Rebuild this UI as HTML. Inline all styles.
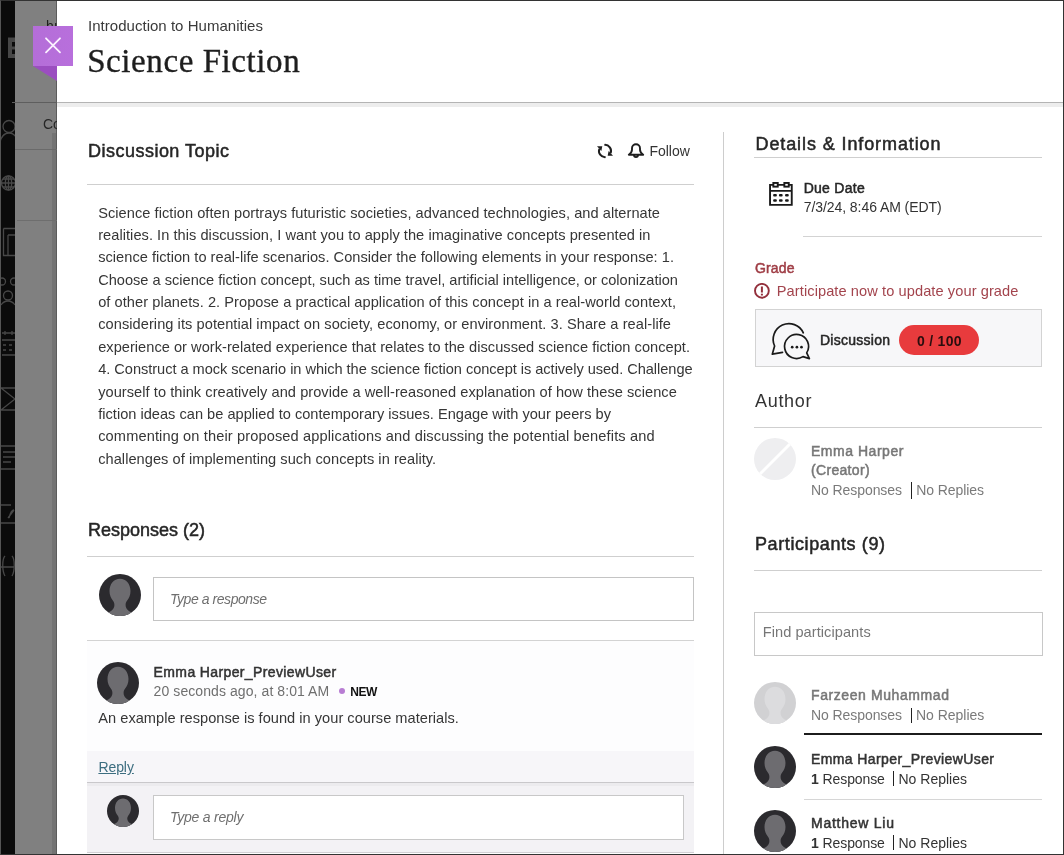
<!DOCTYPE html>
<html><head><meta charset="utf-8"><title>Science Fiction</title><style>html,body{margin:0;padding:0;width:1064px;height:855px;overflow:hidden;background:#fff;font-family:"Liberation Sans",sans-serif}</style></head><body>
<div style="position:relative;width:1064px;height:855px;overflow:hidden;will-change:transform">
<div style="position:absolute;left:0px;top:0px;width:15px;height:855px;background:#0b0b0b;"></div>
<div style="position:absolute;left:15px;top:0px;width:42px;height:855px;background:#808080;"></div>
<div style="position:absolute;left:52px;top:133px;width:4px;height:722px;background:#737373;"></div>
<div style="position:absolute;left:56px;top:0px;width:1px;height:855px;background:#5c5c5c;"></div>
<div style="position:absolute;left:12px;top:102px;width:45px;height:1px;background:#5e5e5e;"></div>
<div style="position:absolute;left:15px;top:149px;width:42px;height:1px;background:#6a6a6a;"></div>
<div style="position:absolute;left:17px;top:220px;width:40px;height:1px;background:#6e6e6e;"></div>
<div style="position:absolute;left:43px;top:117.15px;font-family:'Liberation Sans', sans-serif;font-size:14px;line-height:14px;font-weight:400;font-style:normal;color:#262626;white-space:pre;">Co</div>
<div style="position:absolute;left:46px;top:18.65px;font-family:'Liberation Sans', sans-serif;font-size:14px;line-height:14px;font-weight:400;font-style:normal;color:#1e1e1e;white-space:pre;">hı</div>
<svg style="position:absolute;left:0;top:0" width="15" height="855" viewBox="0 0 15 855">
<rect x="8" y="37.5" width="7" height="20.5" fill="#474747"/><rect x="12" y="42" width="3" height="4.5" fill="#0b0b0b"/><rect x="12" y="49.5" width="3" height="4.5" fill="#0b0b0b"/>
<g fill="none" stroke="#484848" stroke-width="1.3">
<circle cx="9" cy="126.5" r="6"/><path d="M0 142c1.5-6 5-9 9-9s7.5 3 9 9"/>
<circle cx="8.5" cy="183" r="7"/><path d="M1.5 183h14M8.5 176v14M3 179h11M3 187h11"/><ellipse cx="8.5" cy="183" rx="3.2" ry="7"/>
<path d="M3.5 228.5h14M3.5 228.5v27h14M8 235v20M8 235h8"/>
<circle cx="2" cy="281.5" r="3.5"/><circle cx="14" cy="281.5" r="3.5"/><circle cx="8" cy="295.5" r="4.5"/><path d="M1 305c2-3 4-4 7-4s5 1 7 4"/>
<path d="M2 333h13M2 340h13M2 355h13M5 331v4M12 331v4"/><path d="M3 345h3M9 345h3M3 350h3M9 350h3"/>
<path d="M1 388h15M1 410h15M1 388l14 11M1 410l14-11"/>
<path d="M1 446h14M3 452h12M3 457h12M3 462h8M1 469h14"/>
<path d="M1 505h10M1 523h14M8 518l6-8M14 510c-2 0-4 4-5 8"/>
<path d="M5 556c-3 3-3 15 0 20M12 556c3 3 3 15 0 20M0 567h14"/>
</g></svg>
<div style="position:absolute;left:57px;top:0px;width:1007px;height:855px;background:#ffffff;"></div>
<div style="position:absolute;left:57px;top:102px;width:1007px;height:1px;background:#b4b4b4;"></div>
<div style="position:absolute;left:57px;top:103px;width:1007px;height:4px;background:#ededed;"></div>
<svg style="position:absolute;left:33px;top:26px" width="40" height="56" viewBox="0 0 40 56">
<defs><linearGradient id="pg" x1="0" y1="0" x2="1" y2="0"><stop offset="0" stop-color="#b46ed8"/><stop offset="1" stop-color="#b86fdc"/></linearGradient></defs>
<path d="M0 40h24v15z" fill="#9b4ec0"/>
<rect x="0" y="0" width="40" height="40" fill="url(#pg)"/>
<path d="M13 12.3l14 14M27 12.3L13 26.3" stroke="#fbf2ff" stroke-width="1.8" stroke-linecap="round" fill="none"/>
</svg>
<div style="position:absolute;left:88px;top:18.30px;font-family:'Liberation Sans', sans-serif;font-size:15px;line-height:15px;font-weight:400;font-style:normal;color:#3a3a3a;white-space:pre;letter-spacing:0.029px;">Introduction to Humanities</div>
<div style="position:absolute;left:87.2px;top:45.36px;font-family:'Liberation Serif', serif;font-size:33px;line-height:33px;font-weight:400;font-style:normal;color:#1e1e1e;white-space:pre;letter-spacing:0.580px;-webkit-text-stroke:0.35px #1e1e1e">Science Fiction</div>
<div style="position:absolute;left:88px;top:141.76px;font-family:'Liberation Sans', sans-serif;font-size:18px;line-height:18px;font-weight:400;font-style:normal;color:#262626;white-space:pre;letter-spacing:0.484px;-webkit-text-stroke:0.5px #262626;">Discussion Topic</div>
<svg style="position:absolute;left:596px;top:142px;" width="18" height="18" viewBox="0 0 18 18"><g fill="none" stroke="#1e1e1e" stroke-width="2"><path d="M3.4 6.8A6.1 6.1 0 0 0 9.6 15.1"/><path d="M14.6 11.2A6.1 6.1 0 0 0 8.4 2.9"/></g><path d="M1 4.2l5.3 0.1-0.9 4.6z" fill="#1e1e1e"/><path d="M17 13.8l-5.3-0.1 0.9-4.6z" fill="#1e1e1e"/></svg>
<svg style="position:absolute;left:627px;top:142px;" width="18" height="18" viewBox="0 0 18 18"><g fill="none" stroke="#1e1e1e" stroke-width="1.9" stroke-linejoin="round"><path d="M1.8 12.7H16.2C14.2 11.3 13 10 13 7.8V6.2A4 4 0 0 0 5 6.2V7.8C5 10 3.8 11.3 1.8 12.7Z"/><path d="M7 13.1A2 2 0 0 0 11 13.1"/></g></svg>
<div style="position:absolute;left:649.5px;top:143.55px;font-family:'Liberation Sans', sans-serif;font-size:14px;line-height:14px;font-weight:400;font-style:normal;color:#333;white-space:pre;letter-spacing:-0.034px;">Follow</div>
<div style="position:absolute;left:87px;top:184px;width:607px;height:1px;background:#cfcfcf;"></div>
<div style="position:absolute;left:98.2px;top:205.64px;font-family:'Liberation Sans', sans-serif;font-size:14.6px;line-height:14.6px;font-weight:400;font-style:normal;color:#363636;white-space:pre;letter-spacing:0.051px;">Science fiction often portrays futuristic societies, advanced technologies, and alternate</div>
<div style="position:absolute;left:98.2px;top:228.00px;font-family:'Liberation Sans', sans-serif;font-size:14.6px;line-height:14.6px;font-weight:400;font-style:normal;color:#363636;white-space:pre;letter-spacing:0.045px;">realities. In this discussion, I want you to apply the imaginative concepts presented in</div>
<div style="position:absolute;left:98.2px;top:250.36px;font-family:'Liberation Sans', sans-serif;font-size:14.6px;line-height:14.6px;font-weight:400;font-style:normal;color:#363636;white-space:pre;letter-spacing:0.025px;">science fiction to real-life scenarios. Consider the following elements in your response: 1.</div>
<div style="position:absolute;left:98.2px;top:272.72px;font-family:'Liberation Sans', sans-serif;font-size:14.6px;line-height:14.6px;font-weight:400;font-style:normal;color:#363636;white-space:pre;letter-spacing:-0.002px;">Choose a science fiction concept, such as time travel, artificial intelligence, or colonization</div>
<div style="position:absolute;left:98.2px;top:295.08px;font-family:'Liberation Sans', sans-serif;font-size:14.6px;line-height:14.6px;font-weight:400;font-style:normal;color:#363636;white-space:pre;letter-spacing:0.055px;">of other planets. 2. Propose a practical application of this concept in a real-world context,</div>
<div style="position:absolute;left:98.2px;top:317.44px;font-family:'Liberation Sans', sans-serif;font-size:14.6px;line-height:14.6px;font-weight:400;font-style:normal;color:#363636;white-space:pre;letter-spacing:0.062px;">considering its potential impact on society, economy, or environment. 3. Share a real-life</div>
<div style="position:absolute;left:98.2px;top:339.80px;font-family:'Liberation Sans', sans-serif;font-size:14.6px;line-height:14.6px;font-weight:400;font-style:normal;color:#363636;white-space:pre;letter-spacing:0.031px;">experience or work-related experience that relates to the discussed science fiction concept.</div>
<div style="position:absolute;left:98.2px;top:362.16px;font-family:'Liberation Sans', sans-serif;font-size:14.6px;line-height:14.6px;font-weight:400;font-style:normal;color:#363636;white-space:pre;letter-spacing:-0.037px;">4. Construct a mock scenario in which the science fiction concept is actively used. Challenge</div>
<div style="position:absolute;left:98.2px;top:384.52px;font-family:'Liberation Sans', sans-serif;font-size:14.6px;line-height:14.6px;font-weight:400;font-style:normal;color:#363636;white-space:pre;letter-spacing:0.048px;">yourself to think creatively and provide a well-reasoned explanation of how these science</div>
<div style="position:absolute;left:98.2px;top:406.88px;font-family:'Liberation Sans', sans-serif;font-size:14.6px;line-height:14.6px;font-weight:400;font-style:normal;color:#363636;white-space:pre;letter-spacing:0.012px;">fiction ideas can be applied to contemporary issues. Engage with your peers by</div>
<div style="position:absolute;left:98.2px;top:429.24px;font-family:'Liberation Sans', sans-serif;font-size:14.6px;line-height:14.6px;font-weight:400;font-style:normal;color:#363636;white-space:pre;letter-spacing:0.126px;">commenting on their proposed applications and discussing the potential benefits and</div>
<div style="position:absolute;left:98.2px;top:451.60px;font-family:'Liberation Sans', sans-serif;font-size:14.6px;line-height:14.6px;font-weight:400;font-style:normal;color:#363636;white-space:pre;letter-spacing:0.047px;">challenges of implementing such concepts in reality.</div>
<div style="position:absolute;left:88px;top:521.06px;font-family:'Liberation Sans', sans-serif;font-size:18px;line-height:18px;font-weight:400;font-style:normal;color:#262626;white-space:pre;letter-spacing:-0.005px;-webkit-text-stroke:0.5px #262626;">Responses (2)</div>
<div style="position:absolute;left:87px;top:556px;width:607px;height:1px;background:#cfcfcf;"></div>
<svg style="position:absolute;left:99px;top:574px;" width="42" height="42" viewBox="0 0 42 42"><defs><clipPath id="c99_574"><circle cx="21.0" cy="21.0" r="21.0"/></clipPath></defs>
<circle cx="21.0" cy="21.0" r="21.0" fill="#2b2a2e"/>
<g clip-path="url(#c99_574)"><g transform="scale(1.0)"><path fill="#6d6c70" d="M21 4.7C27.2 4.7 31.5 10 31.5 17C31.5 21 30 24.5 28 26.8C27 28 26.6 29.5 26.6 31C26.6 35 30 38 34 38.5L42 40L42 46L0 46L0 40L8 38.5C12 38 15.4 35 15.4 31C15.4 29.5 15 28 14 26.8C12 24.5 10.5 21 10.5 17C10.5 10 14.8 4.7 21 4.7Z"/></g></g></svg>
<div style="position:absolute;left:153px;top:577px;width:541px;height:44px;background:#fff;border:1px solid #c4c4c4;box-sizing:border-box"></div>
<div style="position:absolute;left:170px;top:592.15px;font-family:'Liberation Sans', sans-serif;font-size:14px;line-height:14px;font-weight:400;font-style:italic;color:#6f6f6f;white-space:pre;letter-spacing:-0.446px;">Type a response</div>
<div style="position:absolute;left:87px;top:640px;width:607px;height:1px;background:#d3d3d3;"></div>
<div style="position:absolute;left:87px;top:641px;width:607px;height:110px;background:#fdfdfe;"></div>
<svg style="position:absolute;left:97px;top:662px;" width="42" height="42" viewBox="0 0 42 42"><defs><clipPath id="c97_662"><circle cx="21.0" cy="21.0" r="21.0"/></clipPath></defs>
<circle cx="21.0" cy="21.0" r="21.0" fill="#2b2a2e"/>
<g clip-path="url(#c97_662)"><g transform="scale(1.0)"><path fill="#6d6c70" d="M21 4.7C27.2 4.7 31.5 10 31.5 17C31.5 21 30 24.5 28 26.8C27 28 26.6 29.5 26.6 31C26.6 35 30 38 34 38.5L42 40L42 46L0 46L0 40L8 38.5C12 38 15.4 35 15.4 31C15.4 29.5 15 28 14 26.8C12 24.5 10.5 21 10.5 17C10.5 10 14.8 4.7 21 4.7Z"/></g></g></svg>
<div style="position:absolute;left:153.6px;top:664.65px;font-family:'Liberation Sans', sans-serif;font-size:14px;line-height:14px;font-weight:400;font-style:normal;color:#333;white-space:pre;letter-spacing:0.374px;-webkit-text-stroke:0.5px #333;">Emma Harper_PreviewUser</div>
<div style="position:absolute;left:153.6px;top:683.85px;font-family:'Liberation Sans', sans-serif;font-size:14px;line-height:14px;font-weight:400;font-style:normal;color:#6f6f6f;white-space:pre;letter-spacing:0.081px;">20 seconds ago, at 8:01 AM</div>
<div style="position:absolute;left:339px;top:687.8px;width:6px;height:6px;border-radius:50%;background:#b87dd3"></div>
<div style="position:absolute;left:350.3px;top:685.54px;font-family:'Liberation Sans', sans-serif;font-size:12px;line-height:12px;font-weight:700;font-style:normal;color:#111;white-space:pre;letter-spacing:-0.500px;">NEW</div>
<div style="position:absolute;left:98.3px;top:711.34px;font-family:'Liberation Sans', sans-serif;font-size:14.6px;line-height:14.6px;font-weight:400;font-style:normal;color:#363636;white-space:pre;letter-spacing:0.022px;">An example response is found in your course materials.</div>
<div style="position:absolute;left:87px;top:751px;width:607px;height:31px;background:#f7f6f9;"></div>
<div style="position:absolute;left:98.4px;top:760.35px;font-family:'Liberation Sans', sans-serif;font-size:14px;line-height:14px;font-weight:400;font-style:normal;color:#3d6e80;white-space:pre;letter-spacing:-0.074px;text-decoration:underline;text-underline-offset:1px">Reply</div>
<div style="position:absolute;left:87px;top:782px;width:607px;height:1px;background:#c9c8cb;"></div>
<div style="position:absolute;left:87px;top:783px;width:607px;height:3px;background:#ecebee;"></div>
<div style="position:absolute;left:87px;top:786px;width:607px;height:66px;background:#f3f2f5;"></div>
<div style="position:absolute;left:87px;top:852px;width:607px;height:1px;background:#d2d0d4;"></div>
<svg style="position:absolute;left:107px;top:795px;" width="32" height="32" viewBox="0 0 32 32"><defs><clipPath id="c107_795"><circle cx="16.0" cy="16.0" r="16.0"/></clipPath></defs>
<circle cx="16.0" cy="16.0" r="16.0" fill="#2b2a2e"/>
<g clip-path="url(#c107_795)"><g transform="scale(0.7619047619047619)"><path fill="#6d6c70" d="M21 4.7C27.2 4.7 31.5 10 31.5 17C31.5 21 30 24.5 28 26.8C27 28 26.6 29.5 26.6 31C26.6 35 30 38 34 38.5L42 40L42 46L0 46L0 40L8 38.5C12 38 15.4 35 15.4 31C15.4 29.5 15 28 14 26.8C12 24.5 10.5 21 10.5 17C10.5 10 14.8 4.7 21 4.7Z"/></g></g></svg>
<div style="position:absolute;left:153px;top:795px;width:531px;height:45px;background:#fff;border:1px solid #c8c8c8;box-sizing:border-box"></div>
<div style="position:absolute;left:170px;top:809.85px;font-family:'Liberation Sans', sans-serif;font-size:14px;line-height:14px;font-weight:400;font-style:italic;color:#6f6f6f;white-space:pre;letter-spacing:-0.236px;">Type a reply</div>
<div style="position:absolute;left:723px;top:132px;width:1px;height:723px;background:#cdcdcd;"></div>
<div style="position:absolute;left:755.5px;top:135.46px;font-family:'Liberation Sans', sans-serif;font-size:18px;line-height:18px;font-weight:400;font-style:normal;color:#262626;white-space:pre;letter-spacing:0.896px;-webkit-text-stroke:0.5px #262626;">Details &amp; Information</div>
<div style="position:absolute;left:754px;top:157px;width:288px;height:1px;background:#cfcfcf;"></div>
<svg style="position:absolute;left:768px;top:181px;" width="26" height="26" viewBox="0 0 26 26"><g fill="none" stroke="#1a1a1a" stroke-width="1.9"><path d="M5.3 3.85H2.05V23.85H23.75V3.85H20.7M9.7 3.85H16.35M2.05 9.9H23.75"/><rect x="5.35" y="1.95" width="4.4" height="3.7"/><rect x="16.35" y="1.95" width="4.4" height="3.7"/></g><g fill="#1a1a1a"><rect x="5.15" y="13" width="3.7" height="2.6" rx="1"/><rect x="10.95" y="13" width="3.7" height="2.6" rx="1"/><rect x="17.05" y="13" width="3.7" height="2.6" rx="1"/><rect x="5.15" y="18.2" width="3.7" height="2.6" rx="1"/><rect x="10.95" y="18.2" width="3.7" height="2.6" rx="1"/><rect x="17.05" y="18.2" width="3.7" height="2.6" rx="1"/></g></svg>
<div style="position:absolute;left:803.7px;top:180.65px;font-family:'Liberation Sans', sans-serif;font-size:14px;line-height:14px;font-weight:400;font-style:normal;color:#262626;white-space:pre;letter-spacing:0.263px;-webkit-text-stroke:0.5px #262626;">Due Date</div>
<div style="position:absolute;left:803.7px;top:199.95px;font-family:'Liberation Sans', sans-serif;font-size:14px;line-height:14px;font-weight:400;font-style:normal;color:#333;white-space:pre;letter-spacing:-0.065px;">7/3/24, 8:46 AM (EDT)</div>
<div style="position:absolute;left:803px;top:236px;width:239px;height:1px;background:#d3d3d3;"></div>
<div style="position:absolute;left:755px;top:261.45px;font-family:'Liberation Sans', sans-serif;font-size:14px;line-height:14px;font-weight:400;font-style:normal;color:#9f3d45;white-space:pre;letter-spacing:0.145px;-webkit-text-stroke:0.5px #9f3d45;">Grade</div>
<svg style="position:absolute;left:753px;top:283px;" width="18" height="18" viewBox="0 0 18 18"><circle cx="8.9" cy="7.8" r="6.9" fill="none" stroke="#93303c" stroke-width="1.9"/><rect x="7.9" y="3.5" width="2" height="6" fill="#93303c"/><rect x="7.9" y="10.7" width="2" height="1.8" fill="#93303c"/></svg>
<div style="position:absolute;left:776.8px;top:283.54px;font-family:'Liberation Sans', sans-serif;font-size:14.6px;line-height:14.6px;font-weight:400;font-style:normal;color:#a3444d;white-space:pre;letter-spacing:0.088px;">Participate now to update your grade</div>
<div style="position:absolute;left:755px;top:309px;width:287px;height:58px;background:#f7f7f9;border:1px solid #d3d3d3;box-sizing:border-box"></div>
<svg style="position:absolute;left:765px;top:315px;" width="50" height="50" viewBox="0 0 50 50"><g fill="none" stroke="#1a1a1a" stroke-width="1.7" stroke-linejoin="round" stroke-linecap="round"><path d="M38.3 17.8A15.6 15.6 0 1 0 9.6 31L7.3 39.2L17.5 37.4"/><path d="M41.7 37.9A12 12 0 1 0 38 41.6L44.4 43.6Z"/></g><g fill="#1a1a1a"><circle cx="27.2" cy="32.2" r="1.35"/><circle cx="31.9" cy="32.2" r="1.35"/><circle cx="36.5" cy="32.2" r="1.35"/></g></svg>
<div style="position:absolute;left:820px;top:333.35px;font-family:'Liberation Sans', sans-serif;font-size:14px;line-height:14px;font-weight:400;font-style:normal;color:#262626;white-space:pre;letter-spacing:0.255px;-webkit-text-stroke:0.5px #262626;">Discussion</div>
<div style="position:absolute;left:899px;top:325px;width:80px;height:30px;border-radius:15px;background:#e83b3d"></div>
<div style="position:absolute;left:917px;top:333.65px;font-family:'Liberation Sans', sans-serif;font-size:14px;line-height:14px;font-weight:700;font-style:normal;color:#2a0e0e;white-space:pre;letter-spacing:0.279px;">0 / 100</div>
<div style="position:absolute;left:755px;top:392.26px;font-family:'Liberation Sans', sans-serif;font-size:18px;line-height:18px;font-weight:400;font-style:normal;color:#333;white-space:pre;letter-spacing:0.691px;">Author</div>
<div style="position:absolute;left:754px;top:427px;width:288px;height:1px;background:#cfcfcf;"></div>
<svg style="position:absolute;left:754px;top:438px;" width="42" height="42" viewBox="0 0 42 42"><defs><clipPath id="ca"><circle cx="21" cy="21" r="21"/></clipPath></defs><circle cx="21" cy="21" r="21" fill="#eeeef0"/><path d="M0 42L42 0" stroke="#fff" stroke-width="3" clip-path="url(#ca)"/></svg>
<div style="position:absolute;left:811px;top:444.15px;font-family:'Liberation Sans', sans-serif;font-size:14px;line-height:14px;font-weight:400;font-style:normal;color:#777;white-space:pre;letter-spacing:0.526px;-webkit-text-stroke:0.5px #777;">Emma Harper</div>
<div style="position:absolute;left:811px;top:462.85px;font-family:'Liberation Sans', sans-serif;font-size:14px;line-height:14px;font-weight:400;font-style:normal;color:#777;white-space:pre;letter-spacing:0.323px;-webkit-text-stroke:0.5px #777;">(Creator)</div>
<div style="position:absolute;left:811px;top:483.15px;font-family:'Liberation Sans', sans-serif;font-size:14px;line-height:14px;font-weight:400;font-style:normal;color:#7a7a7a;white-space:pre;letter-spacing:-0.075px;">No Responses</div>
<div style="position:absolute;left:911px;top:482px;width:1px;height:17px;background:#222;"></div>
<div style="position:absolute;left:916.3px;top:483.15px;font-family:'Liberation Sans', sans-serif;font-size:14px;line-height:14px;font-weight:400;font-style:normal;color:#7a7a7a;white-space:pre;letter-spacing:-0.087px;">No Replies</div>
<div style="position:absolute;left:755px;top:535.16px;font-family:'Liberation Sans', sans-serif;font-size:18px;line-height:18px;font-weight:400;font-style:normal;color:#262626;white-space:pre;letter-spacing:0.597px;-webkit-text-stroke:0.5px #262626;">Participants (9)</div>
<div style="position:absolute;left:754px;top:570px;width:288px;height:1px;background:#cfcfcf;"></div>
<div style="position:absolute;left:754px;top:612px;width:289px;height:44px;background:#fff;border:1px solid #c8c8c8;box-sizing:border-box"></div>
<div style="position:absolute;left:762.7px;top:625.44px;font-family:'Liberation Sans', sans-serif;font-size:14.6px;line-height:14.6px;font-weight:400;font-style:normal;color:#767676;white-space:pre;letter-spacing:0.058px;">Find participants</div>
<svg style="position:absolute;left:754px;top:682px;" width="42" height="42" viewBox="0 0 42 42"><defs><clipPath id="c754_682"><circle cx="21.0" cy="21.0" r="21.0"/></clipPath></defs>
<circle cx="21.0" cy="21.0" r="21.0" fill="#d1d1d3"/>
<g clip-path="url(#c754_682)"><g transform="scale(1.0)"><path fill="#dcdcde" d="M21 4.7C27.2 4.7 31.5 10 31.5 17C31.5 21 30 24.5 28 26.8C27 28 26.6 29.5 26.6 31C26.6 35 30 38 34 38.5L42 40L42 46L0 46L0 40L8 38.5C12 38 15.4 35 15.4 31C15.4 29.5 15 28 14 26.8C12 24.5 10.5 21 10.5 17C10.5 10 14.8 4.7 21 4.7Z"/></g></g></svg>
<div style="position:absolute;left:811px;top:687.85px;font-family:'Liberation Sans', sans-serif;font-size:14px;line-height:14px;font-weight:400;font-style:normal;color:#777;white-space:pre;letter-spacing:0.589px;-webkit-text-stroke:0.5px #777;">Farzeen Muhammad</div>
<div style="position:absolute;left:811px;top:707.95px;font-family:'Liberation Sans', sans-serif;font-size:14px;line-height:14px;font-weight:400;font-style:normal;color:#7a7a7a;white-space:pre;letter-spacing:-0.075px;">No Responses</div>
<div style="position:absolute;left:911px;top:708px;width:1px;height:15px;background:#222;"></div>
<div style="position:absolute;left:916px;top:707.95px;font-family:'Liberation Sans', sans-serif;font-size:14px;line-height:14px;font-weight:400;font-style:normal;color:#7a7a7a;white-space:pre;letter-spacing:-0.020px;">No Replies</div>
<div style="position:absolute;left:804px;top:733px;width:238px;height:2px;background:#1c1c1c;"></div>
<svg style="position:absolute;left:754px;top:746px;" width="42" height="42" viewBox="0 0 42 42"><defs><clipPath id="c754_746"><circle cx="21.0" cy="21.0" r="21.0"/></clipPath></defs>
<circle cx="21.0" cy="21.0" r="21.0" fill="#2b2a2e"/>
<g clip-path="url(#c754_746)"><g transform="scale(1.0)"><path fill="#6d6c70" d="M21 4.7C27.2 4.7 31.5 10 31.5 17C31.5 21 30 24.5 28 26.8C27 28 26.6 29.5 26.6 31C26.6 35 30 38 34 38.5L42 40L42 46L0 46L0 40L8 38.5C12 38 15.4 35 15.4 31C15.4 29.5 15 28 14 26.8C12 24.5 10.5 21 10.5 17C10.5 10 14.8 4.7 21 4.7Z"/></g></g></svg>
<div style="position:absolute;left:811px;top:751.85px;font-family:'Liberation Sans', sans-serif;font-size:14px;line-height:14px;font-weight:400;font-style:normal;color:#333;white-space:pre;letter-spacing:0.396px;-webkit-text-stroke:0.5px #333;">Emma Harper_PreviewUser</div>
<div style="position:absolute;left:811px;top:772.15px;font-family:'Liberation Sans', sans-serif;font-size:14px;line-height:14px;font-weight:700;font-style:normal;color:#333;white-space:pre;">1</div>
<div style="position:absolute;left:822.6px;top:772.15px;font-family:'Liberation Sans', sans-serif;font-size:14px;line-height:14px;font-weight:400;font-style:normal;color:#333;white-space:pre;letter-spacing:-0.107px;">Response</div>
<div style="position:absolute;left:893px;top:771px;width:1px;height:15px;background:#222;"></div>
<div style="position:absolute;left:898.5px;top:772.15px;font-family:'Liberation Sans', sans-serif;font-size:14px;line-height:14px;font-weight:400;font-style:normal;color:#333;white-space:pre;letter-spacing:0.002px;">No Replies</div>
<div style="position:absolute;left:804px;top:799px;width:238px;height:1px;background:#d6d6d6;"></div>
<svg style="position:absolute;left:754px;top:810px;" width="42" height="42" viewBox="0 0 42 42"><defs><clipPath id="c754_810"><circle cx="21.0" cy="21.0" r="21.0"/></clipPath></defs>
<circle cx="21.0" cy="21.0" r="21.0" fill="#2b2a2e"/>
<g clip-path="url(#c754_810)"><g transform="scale(1.0)"><path fill="#6d6c70" d="M21 4.7C27.2 4.7 31.5 10 31.5 17C31.5 21 30 24.5 28 26.8C27 28 26.6 29.5 26.6 31C26.6 35 30 38 34 38.5L42 40L42 46L0 46L0 40L8 38.5C12 38 15.4 35 15.4 31C15.4 29.5 15 28 14 26.8C12 24.5 10.5 21 10.5 17C10.5 10 14.8 4.7 21 4.7Z"/></g></g></svg>
<div style="position:absolute;left:811px;top:815.75px;font-family:'Liberation Sans', sans-serif;font-size:14px;line-height:14px;font-weight:400;font-style:normal;color:#333;white-space:pre;letter-spacing:0.752px;-webkit-text-stroke:0.5px #333;">Matthew Liu</div>
<div style="position:absolute;left:811px;top:835.65px;font-family:'Liberation Sans', sans-serif;font-size:14px;line-height:14px;font-weight:700;font-style:normal;color:#333;white-space:pre;">1</div>
<div style="position:absolute;left:822.6px;top:835.65px;font-family:'Liberation Sans', sans-serif;font-size:14px;line-height:14px;font-weight:400;font-style:normal;color:#333;white-space:pre;letter-spacing:-0.107px;">Response</div>
<div style="position:absolute;left:893px;top:835px;width:1px;height:15px;background:#222;"></div>
<div style="position:absolute;left:898.5px;top:835.65px;font-family:'Liberation Sans', sans-serif;font-size:14px;line-height:14px;font-weight:400;font-style:normal;color:#333;white-space:pre;letter-spacing:0.002px;">No Replies</div>
<div style="position:absolute;left:0;top:0;width:1064px;height:855px;box-sizing:border-box;border-top:1px solid #333;border-left:1px solid #555;border-right:1px solid #333;border-bottom:1px solid #333;pointer-events:none"></div>
</div></body></html>
